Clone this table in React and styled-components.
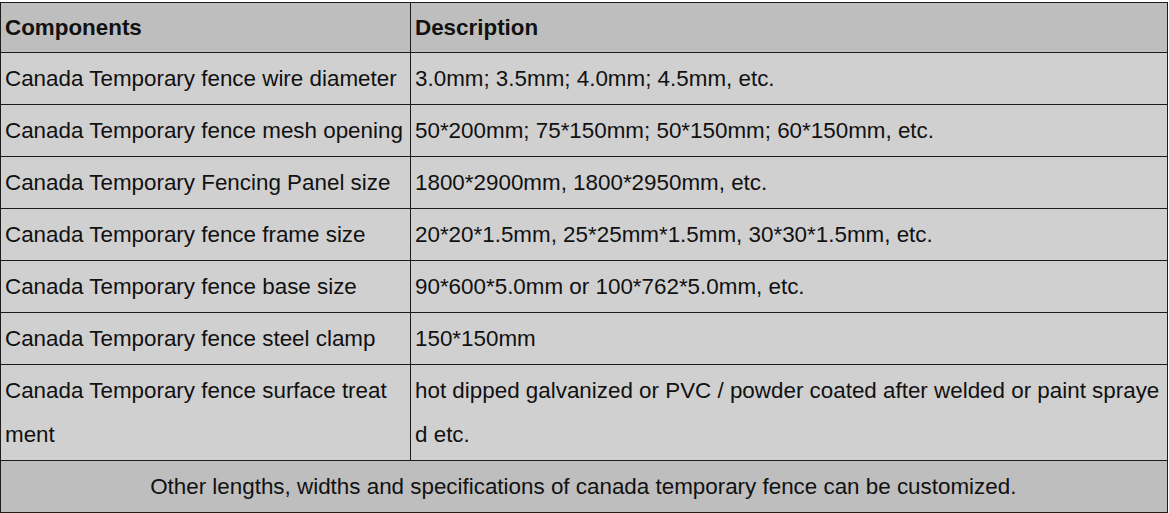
import React from 'react';
import styled, { createGlobalStyle } from 'styled-components';

const GlobalStyle = createGlobalStyle`
  html, body {
    margin: 0;
    padding: 0;
    background: #ffffff;
  }
  body {
    padding-top: 2px;
    font-family: "Liberation Sans", Arial, sans-serif;
  }
`;

const rows = [
  ['Canada Temporary fence wire diameter', '3.0mm; 3.5mm; 4.0mm; 4.5mm, etc.'],
  ['Canada Temporary fence mesh opening', '50*200mm; 75*150mm; 50*150mm; 60*150mm, etc.'],
  ['Canada Temporary Fencing Panel size', '1800*2900mm, 1800*2950mm, etc.'],
  ['Canada Temporary fence frame size', '20*20*1.5mm, 25*25mm*1.5mm, 30*30*1.5mm, etc.'],
  ['Canada Temporary fence base size', '90*600*5.0mm or 100*762*5.0mm, etc.'],
  ['Canada Temporary fence steel clamp', '150*150mm'],
  [
    'Canada Temporary fence surface treatment',
    'hot dipped galvanized or PVC / powder coated after welded or paint sprayed etc.',
  ],
];

const Table = styled.table`
  width: 1168px;
  border-collapse: collapse;
  table-layout: fixed;
  font-size: 22.4px;
  color: #111;
  word-break: break-all;
`;

const Row = styled.tr`
  background: ${({ $shade }) => ($shade ? '#bebebe' : '#d0d0d0')};
`;

const Cell = styled.td`
  border: 1px solid #1c1c1c;
  padding: 4px 5.5px 3px 4px;
  line-height: ${({ $bold }) => ($bold ? '42px' : '44px')};
  vertical-align: middle;
  text-align: ${({ $center }) => ($center ? 'center' : 'left')};
  font-weight: ${({ $bold }) => ($bold ? 700 : 400)};
`;

export default function App() {
  return (
    <>
      <GlobalStyle />
      <Table>
        <colgroup>
          <col style={{ width: 410 }} />
          <col />
        </colgroup>
        <tbody>
          <Row $shade>
            <Cell $bold>Components</Cell>
            <Cell $bold>Description</Cell>
          </Row>
          {rows.map(([name, desc]) => (
            <Row key={name}>
              <Cell>{name}</Cell>
              <Cell>{desc}</Cell>
            </Row>
          ))}
          <Row $shade>
            <Cell colSpan={2} $center>
              Other lengths, widths and specifications of canada temporary fence can be customized.
            </Cell>
          </Row>
        </tbody>
      </Table>
    </>
  );
}
